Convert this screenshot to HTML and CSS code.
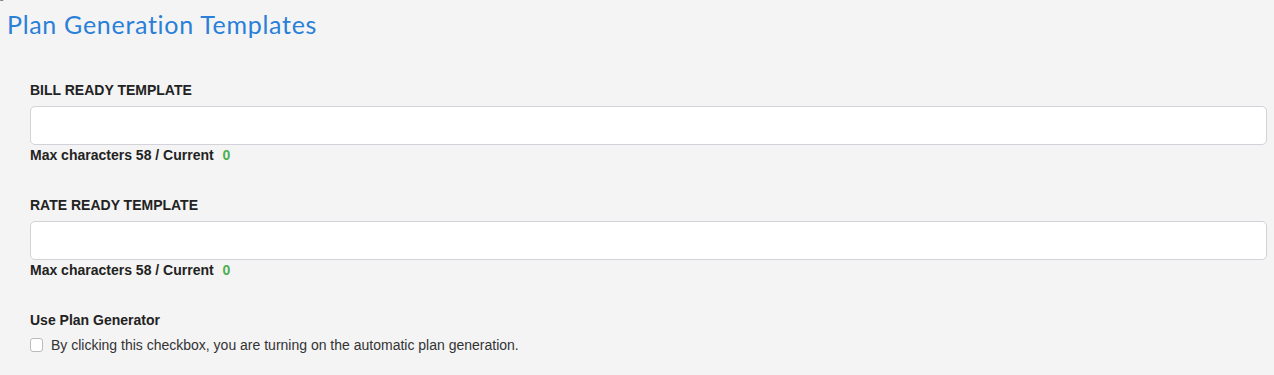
FILE: index.html
```html
<!DOCTYPE html>
<html>
<head>
    <title>Plan Generation Templates</title>
    <link rel="stylesheet" href="styles.css">
</head>
<body>
    <span class="corner-mark">ˆ</span>
    <h2 class="page-title">Plan Generation Templates</h2>

    <form id="planTemplatesForm" class="templates-form">
        <!-- Bill ready -->
        <div class="form-group">
            <label for="billTemplate" class="field-label">BILL READY TEMPLATE</label>
            <input type="text" id="billTemplate" name="billTemplate" maxlength="58">
            <div class="char-count">Max characters 58 / Current <span class="current">0</span></div>
        </div>

        <!-- Rate ready -->
        <div class="form-group">
            <label for="rateTemplate" class="field-label">RATE READY TEMPLATE</label>
            <input type="text" id="rateTemplate" name="rateTemplate" maxlength="58">
            <div class="char-count">Max characters 58 / Current <span class="current">0</span></div>
        </div>

        <!-- Plan generator -->
        <div class="form-group">
            <div class="field-label">Use Plan Generator</div>
            <label class="check-row">
                <input type="checkbox" id="usePlanGenerator" name="usePlanGenerator">
                <span>By clicking this checkbox, you are turning on the automatic plan generation.</span>
            </label>
        </div>
    </form>
</body>
</html>
```

FILE: styles.css
```css
body {
    margin: 0;
    padding: 0 7px 0 0;
    background: #f4f4f4;
    font-family: "Liberation Sans", Arial, sans-serif;
    color: #222;
}

.corner-mark {
    position: absolute;
    left: 0;
    top: 0;
    font-size: 10px;
    line-height: 1;
    color: #333;
}

.page-title {
    margin: 0;
    padding: 8px 0 0 7px;
    font-family: "Lato", "Noto Sans", sans-serif;
    font-weight: 400;
    font-size: 25px;
    line-height: 32px;
    color: #2a7fd8;
    letter-spacing: 0.7px;
}

.templates-form {
    padding: 42px 0 0 30px;
}

.form-group {
    margin-bottom: 34px;
}

.field-label {
    display: block;
    font-size: 14px;
    font-weight: bold;
    line-height: 16px;
    margin-bottom: 8px;
}

input[type="text"] {
    display: block;
    width: 100%;
    height: 39px;
    box-sizing: border-box;
    border: 1px solid #d2d2d8;
    border-radius: 5px;
    background: #fff;
    padding: 6px 10px;
    font-size: 14px;
}

.char-count {
    margin-top: 2px;
    font-size: 14px;
    font-weight: bold;
    line-height: 16px;
}

.char-count .current {
    color: #4caf50;
    margin-left: 5px;
}

.check-row {
    display: flex;
    align-items: center;
    gap: 8px;
    margin-top: 9px;
    font-size: 14px;
    line-height: 16px;
    color: #333;
}

.check-row input {
    appearance: none;
    margin: 0;
    width: 13px;
    height: 14px;
    border: 1px solid #bbb;
    border-radius: 3px;
    background: #fff;
}

.check-row input:checked {
    background: #2a7fd8;
    border-color: #2a7fd8;
}
```
